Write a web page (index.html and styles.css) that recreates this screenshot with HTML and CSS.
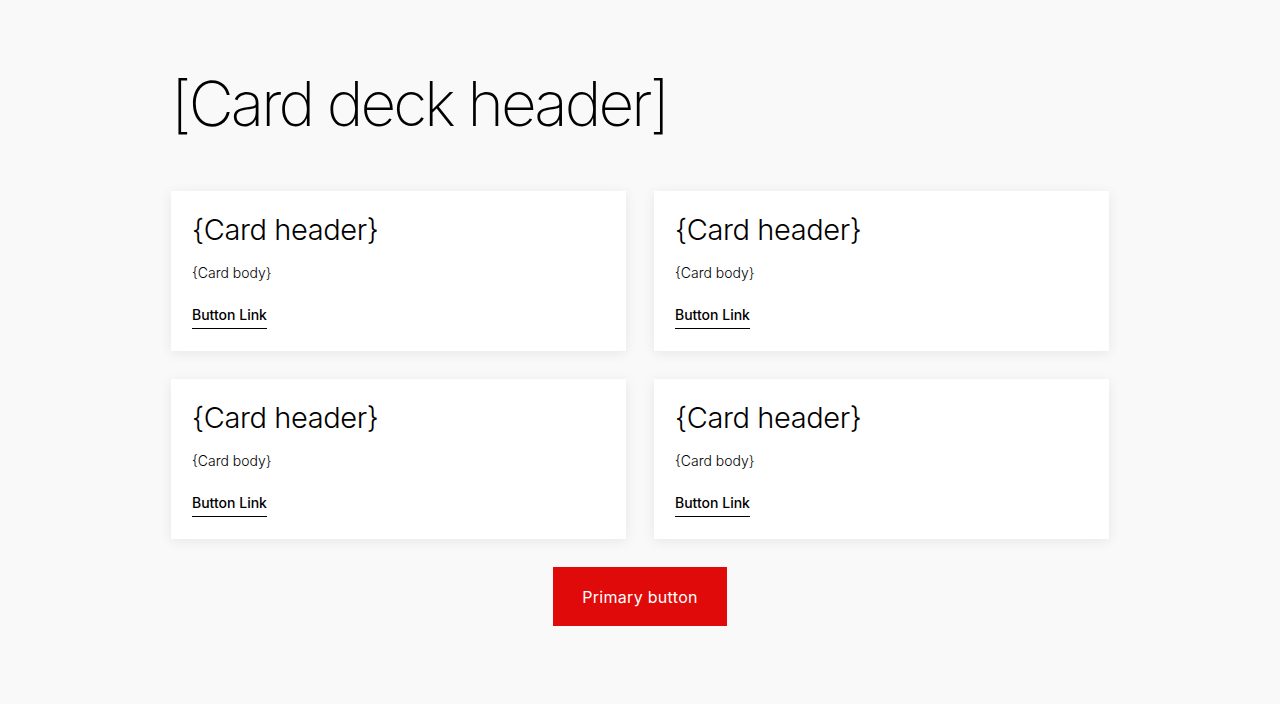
FILE: index.html
```html
<!DOCTYPE html>
<html lang="en">
<head>
<meta charset="utf-8">
<title>Card deck</title>
<link rel="stylesheet" href="styles.css">
</head>
<body>
<main class="deck">
  <h1 class="deck-title">[Card deck header]</h1>
  <div class="grid">
    <section class="card">
      <h2 class="card-title">{Card header}</h2>
      <p class="card-body">{Card body}</p>
      <a class="card-link" href="#">Button Link</a>
    </section>
    <section class="card">
      <h2 class="card-title">{Card header}</h2>
      <p class="card-body">{Card body}</p>
      <a class="card-link" href="#">Button Link</a>
    </section>
    <section class="card">
      <h2 class="card-title">{Card header}</h2>
      <p class="card-body">{Card body}</p>
      <a class="card-link" href="#">Button Link</a>
    </section>
    <section class="card">
      <h2 class="card-title">{Card header}</h2>
      <p class="card-body">{Card body}</p>
      <a class="card-link" href="#">Button Link</a>
    </section>
  </div>
  <div class="actions">
    <button class="primary" type="button">Primary button</button>
  </div>
</main>
</body>
</html>
```
FILE: styles.css
```css
* { box-sizing: border-box; }
html, body { margin: 0; padding: 0; }
body {
  background: #f9f9f9;
  color: #000;
  font-family: Inter, "Liberation Sans", sans-serif;
}
.deck {
  width: 938px;
  margin: 0 auto;
  padding-top: 66px;
}
.deck-title {
  margin: 0;
  font-size: 62px;
  font-weight: 200;
  line-height: 76px;
  letter-spacing: -2.9px;
  height: 125px;
}
.grid {
  display: grid;
  grid-template-columns: 455px 455px;
  gap: 28px;
}
.card {
  background: #fff;
  height: 160px;
  padding: 20px 21px 0;
  box-shadow: 0 2px 12px rgba(0,0,0,0.08);
}
.card-title {
  margin: 0;
  font-size: 29px;
  font-weight: 300;
  line-height: 38px;
  letter-spacing: -0.4px;
}
.card-body {
  margin: 15px 0 0;
  font-size: 14px;
  font-weight: 300;
  line-height: 18px;
}
.card-link {
  display: inline-block;
  margin-top: 24px;
  font-size: 14px;
  font-weight: 500;
  line-height: 18px;
  color: #000;
  text-decoration: none;
  border-bottom: 1px solid #000;
  padding-bottom: 4px;
}
.actions {
  display: flex;
  justify-content: center;
  margin-top: 28px;
}
.primary {
  background: #e00a0a;
  color: #fff;
  border: 0;
  width: 174px;
  height: 59px;
  font-family: Inter, "Liberation Sans", sans-serif;
  font-size: 16px;
  font-weight: 400;
  letter-spacing: 0.3px;
}
```
